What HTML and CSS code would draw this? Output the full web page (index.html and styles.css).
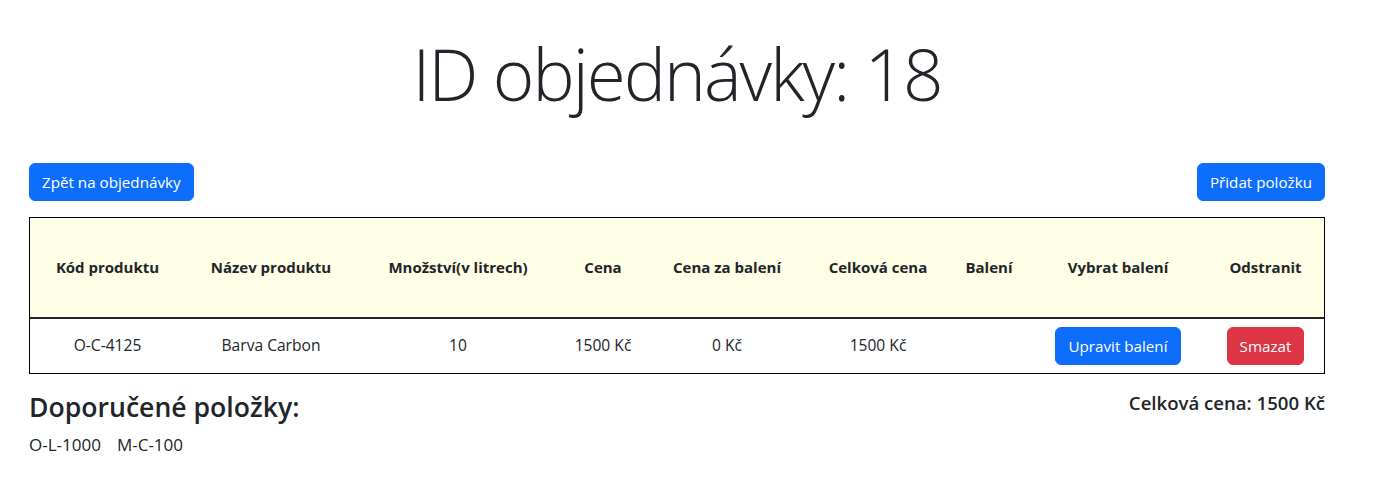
FILE: index.html
```html
<!DOCTYPE html>
<html lang="cs">
<head>
<meta charset="utf-8">
<title>ID objednávky: 18</title>
<link rel="stylesheet" href="styles.css">
</head>
<body>
<div class="page">
  <h1 class="title">ID objednávky: 18</h1>
  <div class="actions">
    <button class="btn btn-primary">Zpět na objednávky</button>
    <button class="btn btn-primary">Přidat položku</button>
  </div>
  <table class="items">
    <colgroup>
      <col class="c1"><col class="c2"><col class="c3"><col class="c4"><col class="c5"><col class="c6"><col class="c7"><col class="c8"><col class="c9">
    </colgroup>
    <thead>
      <tr>
        <th>Kód produktu</th>
        <th>Název produktu</th>
        <th>Množství(v litrech)</th>
        <th>Cena</th>
        <th>Cena za balení</th>
        <th>Celková cena</th>
        <th>Balení</th>
        <th>Vybrat balení</th>
        <th>Odstranit</th>
      </tr>
    </thead>
    <tbody>
      <tr>
        <td>O-C-4125</td>
        <td>Barva Carbon</td>
        <td>10</td>
        <td>1500 Kč</td>
        <td>0 Kč</td>
        <td>1500 Kč</td>
        <td></td>
        <td><button class="btn btn-primary">Upravit balení</button></td>
        <td><button class="btn btn-danger">Smazat</button></td>
      </tr>
    </tbody>
  </table>
  <div class="summary">
    <div class="recommended">
      <h3 class="rec-title">Doporučené položky:</h3>
      <div class="rec-list"><span class="rec-item">O-L-1000</span><span class="rec-item">M-C-100</span></div>
    </div>
    <h5 class="total">Celková cena: 1500 Kč</h5>
  </div>
</div>
</body>
</html>
```

FILE: styles.css
```css
* { box-sizing: border-box; }
html, body { margin: 0; padding: 0; background: #fff; }
body {
  font-family: "Segoe UI", "Open Sans", "Noto Sans", sans-serif;
  font-size: 16px;
  line-height: 1.5;
  color: #212529;
}
.page {
  padding: 26px 55px 0 29px;
}
.title {
  margin: 0 0 41px;
  font-size: 71px;
  font-weight: 300;
  letter-spacing: -2px;
  line-height: 96px;
  text-align: center;
}
.actions {
  display: flex;
  justify-content: space-between;
  margin-bottom: 16px;
}
.btn {
  display: inline-block;
  font-family: inherit;
  font-size: 15.2px;
  line-height: 24px;
  padding: 6px 12px;
  border: 1px solid transparent;
  border-radius: 6px;
  color: #fff;
  cursor: pointer;
}
.btn-primary { background: #0d6efd; border-color: #0d6efd; }
.btn-danger { background: #dc3545; border-color: #dc3545; }
.items {
  width: 1296px;
  table-layout: fixed;
  border-collapse: separate;
  border-spacing: 0;
  border: 1px solid #000;
  margin-bottom: 18px;
}
.c1 { width: 155px; }
.c2 { width: 172px; }
.c3 { width: 202px; }
.c4 { width: 88px; }
.c5 { width: 160px; }
.c6 { width: 142px; }
.c7 { width: 80px; }
.c8 { width: 178px; }
.c9 { width: 117px; }
.items th {
  height: 101px;
  background: #fffee6;
  border-bottom: 2px solid #212529;
  font-size: 15px;
  font-weight: 700;
  text-align: center;
  vertical-align: middle;
  padding: 8px 4px;
  white-space: nowrap;
}
.items td {
  height: 54px;
  padding: 8px 4px;
  text-align: center;
  vertical-align: middle;
  font-size: 15.6px;
  white-space: nowrap;
}
.summary {
  display: flex;
  justify-content: space-between;
  align-items: flex-start;
}
.rec-title {
  margin: 0 0 9px;
  font-size: 26.6px;
  font-weight: 600;
  line-height: 1.2;
}
.rec-list {
  display: flex;
  gap: 16px;
  font-size: 17px;
  line-height: 24px;
}
.total {
  margin: 0;
  font-size: 18.6px;
  font-weight: 600;
  line-height: 1.2;
}
```
